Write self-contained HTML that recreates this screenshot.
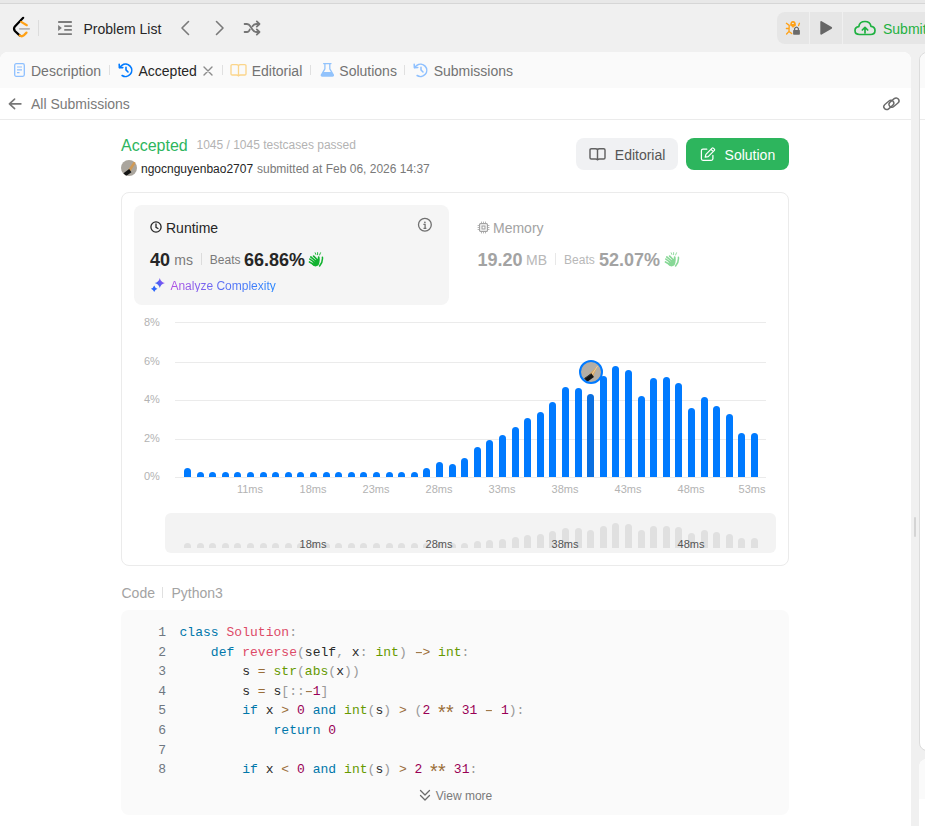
<!DOCTYPE html>
<html><head><meta charset="utf-8">
<style>
*{margin:0;padding:0;box-sizing:border-box}
html,body{width:925px;height:826px;overflow:hidden;background:#f0f0f0;font-family:"Liberation Sans",sans-serif}
.a{position:absolute}
.t{position:absolute;white-space:nowrap;line-height:1}
.bar{position:absolute;width:7px;border-radius:3.5px 3.5px 0 0}
.mbar{position:absolute;width:7px;border-radius:3.5px 3.5px 0 0;background:#e0e0e0}
.grid{position:absolute;left:175px;width:591px;height:1px;background:#ebebeb}
.yl{position:absolute;font-size:11px;color:#b3b3b3;line-height:1;white-space:nowrap}
.xl{position:absolute;font-size:11px;color:#b3b3b3;line-height:1;white-space:nowrap;width:60px;text-align:center}
.code{position:absolute;left:179.5px;font-family:"Liberation Mono",monospace;font-size:13px;line-height:1;letter-spacing:0.03px;white-space:pre;color:#2a2a2a}
.ln{position:absolute;left:130px;width:36px;text-align:right;font-family:"Liberation Mono",monospace;font-size:13px;line-height:1;color:#6e7781}
.ast{display:inline-block;transform:translateY(4.6px) scale(1.5)} .mn{display:inline-block;transform:scaleX(1.7)}
.k{color:#0077aa} .f{color:#dd4a68} .b{color:#669900} .o{color:#9a6e3a} .n{color:#990055} .p{color:#999}
</style></head><body>
<!-- top strip -->
<div class="a" style="left:0;top:0;width:925px;height:3px;background:#e8e8e8"></div>
<div class="a" style="left:0;top:3px;width:925px;height:1px;background:#d6d6d6"></div>

<!-- logo -->
<svg class="a" style="left:0;top:0" width="40" height="40" viewBox="0 0 40 40">
  <path d="M23.2 17.8 L14.9 26.4 Q13.1 28.7 14.9 31 L19.6 35.4" stroke="#000" stroke-width="2.2" fill="none" stroke-linecap="round"/>
  <path d="M21.2 21.9 L26.8 25.2" stroke="#ffa116" stroke-width="2.2" fill="none" stroke-linecap="round"/>
  <path d="M19.6 35.4 Q21.8 37.2 24 35.1 L26.5 32.6" stroke="#ffa116" stroke-width="2.2" fill="none" stroke-linecap="round"/>
  <path d="M19.8 28.8 H29.2" stroke="#b3b3b3" stroke-width="1.7" fill="none" stroke-linecap="round"/>
</svg>
<div class="a" style="left:38px;top:20px;width:1px;height:16px;background:#dcdcdc"></div>

<!-- problem list icon -->
<svg class="a" style="left:54px;top:16px" width="24" height="24" viewBox="0 0 24 24"><g fill="#7c7c7c">
  <rect x="4.1" y="5.1" width="13.8" height="1.8" rx="0.3"/>
  <rect x="10.2" y="9.2" width="7.7" height="1.7" rx="0.3"/>
  <rect x="10.2" y="13.1" width="7.7" height="1.7" rx="0.3"/>
  <rect x="4.1" y="17.2" width="13.8" height="1.8" rx="0.3"/>
  <path d="M4.1 8.9 L7.9 11.95 L4.1 15 Z"/></g>
</svg>
<div class="t" style="left:83.5px;top:22.35px;font-size:14px;color:#262626;font-weight:400;">Problem List</div>
<svg class="a" style="left:179px;top:20px" width="12" height="16" viewBox="0 0 12 16"><path d="M9.5 1.5 L3 8 L9.5 14.5" stroke="#7a7a7a" stroke-width="1.6" fill="none" stroke-linecap="round" stroke-linejoin="round"/></svg>
<svg class="a" style="left:214px;top:20px" width="12" height="16" viewBox="0 0 12 16"><path d="M2.5 1.5 L9 8 L2.5 14.5" stroke="#7a7a7a" stroke-width="1.6" fill="none" stroke-linecap="round" stroke-linejoin="round"/></svg>
<svg class="a" style="left:238px;top:16px" width="28" height="24" viewBox="0 0 28 24">
  <g stroke="#757575" stroke-width="1.8" fill="none" stroke-linecap="round" stroke-linejoin="round">
  <path d="M6.6 8 H9 Q11 8 12.5 10.5 L14.2 13.3 Q15.8 16 18.5 16 H21"/>
  <path d="M6.6 16 H9 Q11 16 11.8 13.5"/>
  <path d="M14.5 10.2 Q16 8 18.5 8 H21"/>
  <path d="M18.8 5.4 L21.5 8 L18.8 10.6 M18.8 13.4 L21.5 16 L18.8 18.6"/>
  </g>
</svg>

<!-- right toolbar -->
<div class="a" style="left:777px;top:12px;width:160px;height:32px;border-radius:8px;background:#e6e6e6"></div>
<div class="a" style="left:809px;top:12px;width:1px;height:32px;background:#f0f0f0"></div>
<div class="a" style="left:842px;top:12px;width:1px;height:32px;background:#f0f0f0"></div>
<svg class="a" style="left:782px;top:18px" width="22" height="20" viewBox="0 0 22 20">
  <g stroke="#ffa116" stroke-width="1.35" fill="none" stroke-linecap="round" stroke-linejoin="round">
    <path d="M4.4 5.3 L7.2 7.4 M7.2 7.4 L7 13.5 M4.4 10.5 H7 M4.6 16 L7 13.4 L9.7 15.6 M17.4 5.3 L16.6 7.6"/>
  </g>
  <path d="M8.2 7.6 Q8 3 11 3 Q14 3 13.9 7.4 Q13.2 8.6 11 8.8 Q8.8 8.6 8.2 7.6 Z" fill="#ffa116"/>
  <rect x="10.1" y="8" width="1.8" height="1.4" fill="#ffa116"/>
  <ellipse cx="10.9" cy="5.4" rx="1.05" ry="0.55" fill="#e6e6e6"/>
  <rect x="11.1" y="12" width="6.8" height="4.8" rx="0.7" fill="#6b6b6b"/>
  <path d="M12.6 12.2 V10.5 Q14.5 7.6 16.4 10.5 V12.2" stroke="#6b6b6b" stroke-width="1.3" fill="none"/>
</svg>
<svg class="a" style="left:819px;top:20px" width="14" height="16" viewBox="0 0 14 16"><path d="M2.2 2 L12.2 7.9 L2.2 13.8 Z" fill="#666" stroke="#666" stroke-width="1.8" stroke-linejoin="round"/></svg>
<svg class="a" style="left:854px;top:20px" width="22" height="16" viewBox="0 0 22 16">
  <path d="M5.5 14.5 Q1 14.5 1 10.5 Q1 7 4.8 6.6 Q5.5 1.5 11 1.5 Q16 1.5 17 6.3 Q21 6.8 21 10.5 Q21 14.5 16.5 14.5 Z" stroke="#1fb141" stroke-width="1.7" fill="none" stroke-linejoin="round"/>
  <path d="M11 13 V7.5 M8.3 10 L11 7.3 L13.7 10" stroke="#1fb141" stroke-width="1.7" fill="none" stroke-linecap="round" stroke-linejoin="round"/>
</svg>
<div class="t" style="left:883px;top:21.65px;font-size:14px;color:#1fb141;font-weight:400;">Submit</div>

<!-- left panel -->
<div class="a" style="left:0;top:52px;width:911px;height:800px;background:#fff;border-radius:8px 8px 0 0;overflow:hidden">
  <div class="a" style="left:0;top:0;width:911px;height:36px;background:#fafafa"></div>
  <div class="a" style="left:0;top:67px;width:911px;height:1px;background:#ebebeb"></div>
</div>

<!-- right panel -->
<div class="a" style="left:919px;top:52px;width:40px;height:699px;background:#fff;border:1px solid #dcdcdc;border-radius:8px">
  <div class="a" style="left:0;top:0;width:40px;height:35px;background:#fafafa;border-radius:8px 0 0 0"></div>
  <div class="a" style="left:0;top:66px;width:40px;height:1px;background:#ebebeb"></div>
</div>
<div class="a" style="left:918.5px;top:759px;width:40px;height:100px;background:#fff;border-radius:8px;overflow:hidden">
  <div class="a" style="left:0;top:0;width:40px;height:40px;background:#fafafa"></div>
</div>
<div class="a" style="left:913.5px;top:517px;width:2px;height:20px;background:#d4d4d4;border-radius:1px"></div>

<!-- tabs -->
<svg class="a" style="left:14px;top:63px" width="11" height="14" viewBox="0 0 11 14">
  <rect x="0.7" y="0.7" width="9.6" height="12.6" rx="1.5" stroke="#8ec0ff" stroke-width="1.3" fill="none"/>
  <path d="M3 4 H8 M3 6.8 H8 M3 9.6 H5.5" stroke="#8ec0ff" stroke-width="1.2"/>
</svg>
<div class="t" style="left:31px;top:64.15px;font-size:14px;color:#737373;font-weight:400;">Description</div>
<div class="a" style="left:109px;top:65px;width:1px;height:10px;background:#e0e0e0"></div>
<svg class="a" style="left:114px;top:58px" width="22" height="22" viewBox="0 0 22 22">
  <g stroke="#007aff" stroke-width="1.6" fill="none" stroke-linecap="round" stroke-linejoin="round">
  <path d="M8.1 17.5 A6.2 6.2 0 1 0 7.9 7.3 L5.6 9.5"/>
  <path d="M5.2 6.2 L5.4 9.7 L8.8 9.6"/>
  <path d="M12 9.2 V11.9 L14 14"/>
  </g>
</svg>
<div class="t" style="left:138.5px;top:64.15px;font-size:14px;color:#262626;font-weight:400;">Accepted</div>
<svg class="a" style="left:203px;top:66px" width="10" height="10" viewBox="0 0 10 10"><path d="M1 1 L9 9 M9 1 L1 9" stroke="#8c8c8c" stroke-width="1.4" stroke-linecap="round"/></svg>
<div class="a" style="left:222px;top:65px;width:1px;height:10px;background:#e0e0e0"></div>
<svg class="a" style="left:230px;top:64px" width="17" height="13" viewBox="0 0 17 13">
  <path d="M8.5 1.6 Q8 0.7 6.5 0.7 H2.2 Q1 0.7 1 1.9 V9.9 Q1 11 2.2 11 H6.5 Q8 11 8.5 12 Q9 11 10.5 11 H14.8 Q16 11 16 9.9 V1.9 Q16 0.7 14.8 0.7 H10.5 Q9 0.7 8.5 1.6 Z M8.5 1.6 V12" stroke="#fbd58a" stroke-width="1.3" fill="none" stroke-linejoin="round"/>
</svg>
<div class="t" style="left:251.7px;top:64.15px;font-size:14px;color:#737373;font-weight:400;">Editorial</div>
<div class="a" style="left:310px;top:65px;width:1px;height:10px;background:#e0e0e0"></div>
<svg class="a" style="left:316px;top:58px" width="24" height="22" viewBox="0 0 24 22">
  <path d="M7.6 5.6 H15" stroke="#92c3fc" stroke-width="1.3" stroke-linecap="round"/>
  <path d="M8.9 5.8 V10.8 L5.4 16.8 Q4.9 18 6.3 18 H16.4 Q17.8 18 17.3 16.8 L13.8 10.8 V5.8" stroke="#92c3fc" stroke-width="1.3" fill="none" stroke-linejoin="round"/>
  <path d="M7.1 14 H15.6 L17.2 16.8 Q17.8 18 16.4 18 H6.3 Q4.9 18 5.5 16.8 Z" fill="#92c3fc"/>
</svg>
<div class="t" style="left:339.3px;top:64.15px;font-size:14px;color:#737373;font-weight:400;">Solutions</div>
<div class="a" style="left:404px;top:65px;width:1px;height:10px;background:#e0e0e0"></div>
<svg class="a" style="left:409px;top:58px" width="22" height="22" viewBox="0 0 22 22">
  <g stroke="#8ec0ff" stroke-width="1.5" fill="none" stroke-linecap="round" stroke-linejoin="round">
  <path d="M8.1 17.5 A6.2 6.2 0 1 0 7.9 7.3 L5.6 9.5"/>
  <path d="M5.2 6.2 L5.4 9.7 L8.8 9.6"/>
  <path d="M12 9.2 V11.9 L14 14"/>
  </g>
</svg>
<div class="t" style="left:433.7px;top:64.15px;font-size:14px;color:#737373;font-weight:400;">Submissions</div>

<!-- All submissions row -->
<svg class="a" style="left:0;top:92px" width="24" height="24" viewBox="0 0 24 24"><path d="M20.9 11.9 H9.6 M14.6 7.1 L9.4 11.9 L14.6 16.7" stroke="#777" stroke-width="1.6" fill="none" stroke-linecap="round" stroke-linejoin="round"/></svg>
<div class="t" style="left:31px;top:97.15px;font-size:14px;color:#7a7a7a;font-weight:400;">All Submissions</div>
<svg class="a" style="left:880px;top:94px" width="22" height="20" viewBox="0 0 22 20">
  <g stroke="#6b6b6b" stroke-width="1.4" fill="none">
   <rect x="-5.6" y="-2.9" width="11.2" height="5.8" rx="2.9" transform="translate(8.8 10.9) rotate(-40)"/>
   <rect x="-5.6" y="-2.9" width="11.2" height="5.8" rx="2.9" transform="translate(14 8.6) rotate(-40)"/>
  </g>
</svg>

<!-- header -->
<div class="t" style="left:121px;top:138.46px;font-size:16px;color:#2db55d;font-weight:400;">Accepted</div>
<div class="t" style="left:196.5px;top:138.84px;font-size:12px;color:#b3b3b3;font-weight:400;">1045 / 1045 testcases passed</div>
<div class="a" style="left:121px;top:160px;width:16px;height:16px;border-radius:50%;background:#aaa59d;overflow:hidden">
 <svg class="a" style="left:0;top:0" width="16" height="16" viewBox="0 0 16 16">
  <path d="M13.5 2.6 L7.8 11.5" stroke="#d09a55" stroke-width="2.6" stroke-linecap="round"/>
  <path d="M9.3 10.6 L3.6 14.8" stroke="#151515" stroke-width="3.8"/>
 </svg>
</div>
<div class="t" style="left:141px;top:162.54px;font-size:12px;color:#262626;font-weight:400;">ngocnguyenbao2707</div>
<div class="t" style="left:257px;top:162.54px;font-size:12px;color:#7a7a7a;font-weight:400;">submitted at Feb 06, 2026 14:37</div>

<!-- buttons -->
<div class="a" style="left:576px;top:138px;width:102px;height:32px;border-radius:8px;background:#f0f1f3"></div>
<svg class="a" style="left:589.3px;top:147.6px" width="17" height="13" viewBox="0 0 17 13">
  <path d="M8.5 1.6 Q8 0.8 6.5 0.8 H2.3 Q1 0.8 1 2 V9.7 Q1 10.9 2.3 10.9 H6.5 Q8 10.9 8.5 11.8 Q9 10.9 10.5 10.9 H14.7 Q16 10.9 16 9.7 V2 Q16 0.8 14.7 0.8 H10.5 Q9 0.8 8.5 1.6 Z M8.5 1.6 V11.8" stroke="#626262" stroke-width="1.45" fill="none" stroke-linejoin="round"/>
</svg>
<div class="t" style="left:614.8px;top:148.15px;font-size:14px;color:#555;font-weight:400;">Editorial</div>
<div class="a" style="left:686px;top:138px;width:103px;height:32px;border-radius:8px;background:#2db55d"></div>
<svg class="a" style="left:694px;top:142px" width="24" height="22" viewBox="0 0 24 22">
  <path d="M12.8 7.2 H9 Q7.4 7.2 7.4 8.8 V16.8 Q7.4 18.3 9 18.3 H17.3 Q18.9 18.3 18.9 16.8 V13.3" stroke="#fff" stroke-width="1.25" fill="none" stroke-linecap="round"/>
  <path d="M11.2 15.1 L11.9 12.3 L18.1 6.1 Q18.7 5.5 19.3 6.1 L20.4 7.2 Q21 7.8 20.4 8.4 L14.2 14.6 Z M17 7.3 L19.2 9.5" stroke="#fff" stroke-width="1.2" fill="none" stroke-linejoin="round"/>
</svg>
<div class="t" style="left:724.6px;top:148.15px;font-size:14px;color:#fff;font-weight:400;">Solution</div>

<!-- outer card -->
<div class="a" style="left:121px;top:192px;width:668px;height:374px;border:1px solid #ebebeb;border-radius:8px"></div>
<div class="a" style="left:134px;top:205px;width:315px;height:100px;border-radius:8px;background:#f5f5f5"></div>
<svg class="a" style="left:149.5px;top:220.8px" width="12" height="12" viewBox="0 0 12 12"><circle cx="6" cy="6" r="5.1" stroke="#262626" stroke-width="1.3" fill="none"/><path d="M6 3 V6.3 L8 7.5" stroke="#262626" stroke-width="1.3" fill="none" stroke-linecap="round"/></svg>
<div class="t" style="left:166px;top:220.75px;font-size:14px;color:#262626;font-weight:400;">Runtime</div>
<svg class="a" style="left:417px;top:217px" width="16" height="16" viewBox="0 0 16 16">
  <circle cx="7.9" cy="7.8" r="6.4" stroke="#707070" stroke-width="1.3" fill="none"/>
  <path d="M6.4 7.4 H8.1 V11.3 M6.5 11.3 H9.4" stroke="#707070" stroke-width="1.3" fill="none"/>
  <circle cx="7.9" cy="5.3" r="0.85" fill="#707070"/>
</svg>
<div class="t" style="left:150px;top:250.76px;font-size:18px;color:#262626;font-weight:700;">40</div>
<div class="t" style="left:174.3px;top:253.35px;font-size:14px;color:#7a7a7a;font-weight:400;">ms</div>
<div class="a" style="left:201px;top:253px;width:1px;height:12px;background:#dcdcdc"></div>
<div class="t" style="left:209.8px;top:254.24px;font-size:12px;color:#7a7a7a;font-weight:400;">Beats</div>
<div class="t" style="left:244px;top:250.76px;font-size:18px;color:#262626;font-weight:700;">66.86%</div>
<svg class="a" style="left:308px;top:251.5px" width="16" height="15" viewBox="0 0 16 15">
  <g stroke="#11b22f" stroke-linecap="round" fill="none">
    <path d="M5.6 4.2 L9.5 8 M2.8 5 L8.5 9.6 M1.9 7.1 L7.5 11 M1.5 10 L6 12.5" stroke-width="1.7"/>
    <path d="M10.7 5.2 Q11.2 8 10.4 10.5" stroke-width="1.8"/>
    <path d="M14.4 5.2 Q15 10 11.6 14" stroke-width="1.5"/>
    <path d="M7.2 0.8 L7.8 2.4 M9.6 0.6 V2.7 M12.5 0.8 L11.6 3" stroke-width="0.9"/>
  </g>
  <path d="M5.5 8.5 L10.2 6.5 Q11.4 9 11.2 11.5 Q10.8 14 7.5 14.4 Q5 14.3 3.6 12 Z" fill="#11b22f"/>
  <path d="M4.3 4.7 L7.6 7.6 M2.4 6.1 L6.4 9.2 M1.7 8.6 L5 10.8" stroke="#f5f5f5" stroke-width="0.45" stroke-linecap="round" opacity="0.8"/>
</svg>
<svg class="a" style="left:148px;top:276px" width="20" height="18" viewBox="0 0 20 18">
  <defs><linearGradient id="sg" gradientUnits="userSpaceOnUse" x1="3" y1="14" x2="17" y2="6"><stop offset="0" stop-color="#1f66ff"/><stop offset="0.5" stop-color="#3d63f5"/><stop offset="1" stop-color="#9b4ef0"/></linearGradient></defs>
  <path d="M11.8 1.9000000000000004 Q12.718 6.082 16.9 7 Q12.718 7.918 11.8 12.1 Q10.882000000000001 7.918 6.700000000000001 7 Q10.882000000000001 6.082 11.8 1.9000000000000004 Z" fill="url(#sg)"/>
  <path d="M6.2 9.5 Q7.025 11.975000000000001 9.5 12.8 Q7.025 13.625 6.2 16.1 Q5.375 13.625 2.9000000000000004 12.8 Q5.375 11.975000000000001 6.2 9.5 Z" fill="url(#sg)"/>
</svg>
<div class="t" style="left:170.4px;top:279.84px;font-size:12px;background:linear-gradient(90deg,#b34fe3,#5a6ef5 50%,#2a88ff);-webkit-background-clip:text;background-clip:text;color:transparent">Analyze Complexity</div>

<!-- memory -->
<svg class="a" style="left:477px;top:220.5px" width="13" height="13" viewBox="0 0 13 13">
  <g stroke="#a3a3a3" fill="none">
  <rect x="2.6" y="2.6" width="7.8" height="7.8" rx="1" stroke-width="1.2"/>
  <rect x="5" y="5" width="3" height="3" stroke-width="1.1"/>
  <path d="M4.5 0.6 V2.2 M6.5 0.6 V2.2 M8.5 0.6 V2.2 M4.5 10.8 V12.4 M6.5 10.8 V12.4 M8.5 10.8 V12.4 M0.6 4.5 H2.2 M0.6 6.5 H2.2 M0.6 8.5 H2.2 M10.8 4.5 H12.4 M10.8 6.5 H12.4 M10.8 8.5 H12.4" stroke-width="0.8"/>
  </g>
</svg>
<div class="t" style="left:493px;top:220.75px;font-size:14px;color:#a3a3a3;font-weight:400;">Memory</div>
<div class="t" style="left:477.5px;top:250.76px;font-size:18px;color:#a3a3a3;font-weight:700;">19.20</div>
<div class="t" style="left:526px;top:253.35px;font-size:14px;color:#b8b8b8;font-weight:400;">MB</div>
<div class="a" style="left:555px;top:253px;width:1px;height:12px;background:#e8e8e8"></div>
<div class="t" style="left:564.1px;top:254.24px;font-size:12px;color:#b8b8b8;font-weight:400;">Beats</div>
<div class="t" style="left:599px;top:250.76px;font-size:18px;color:#a3a3a3;font-weight:700;">52.07%</div>
<svg class="a" style="left:663.5px;top:251.5px" width="16" height="15" viewBox="0 0 16 15" opacity="0.5">
  <g stroke="#11b22f" stroke-linecap="round" fill="none">
    <path d="M5.6 4.2 L9.5 8 M2.8 5 L8.5 9.6 M1.9 7.1 L7.5 11 M1.5 10 L6 12.5" stroke-width="1.7"/>
    <path d="M10.7 5.2 Q11.2 8 10.4 10.5" stroke-width="1.8"/>
    <path d="M14.4 5.2 Q15 10 11.6 14" stroke-width="1.5"/>
    <path d="M7.2 0.8 L7.8 2.4 M9.6 0.6 V2.7 M12.5 0.8 L11.6 3" stroke-width="0.9"/>
  </g>
  <path d="M5.5 8.5 L10.2 6.5 Q11.4 9 11.2 11.5 Q10.8 14 7.5 14.4 Q5 14.3 3.6 12 Z" fill="#11b22f"/>
  <path d="M4.3 4.7 L7.6 7.6 M2.4 6.1 L6.4 9.2 M1.7 8.6 L5 10.8" stroke="#f5f5f5" stroke-width="0.45" stroke-linecap="round" opacity="0.8"/>
</svg>

<!-- chart -->
<div class="grid" style="top:322px"></div>
<div class="grid" style="top:362px"></div>
<div class="grid" style="top:400px"></div>
<div class="grid" style="top:439px"></div>
<div class="grid" style="top:477px"></div>
<div class="yl" style="left:144px;top:316.5px">8%</div>
<div class="yl" style="left:144px;top:355.5px">6%</div>
<div class="yl" style="left:144px;top:393.5px">4%</div>
<div class="yl" style="left:144px;top:432.5px">2%</div>
<div class="yl" style="left:144px;top:470.5px">0%</div>
<div class="bar" style="left:184.0px;top:468px;height:9px;background:#007aff"></div><div class="bar" style="left:196.6px;top:472px;height:5px;background:#007aff"></div><div class="bar" style="left:209.2px;top:472px;height:5px;background:#007aff"></div><div class="bar" style="left:221.8px;top:472px;height:5px;background:#007aff"></div><div class="bar" style="left:234.4px;top:472px;height:5px;background:#007aff"></div><div class="bar" style="left:247.0px;top:472px;height:5px;background:#007aff"></div><div class="bar" style="left:259.6px;top:472px;height:5px;background:#007aff"></div><div class="bar" style="left:272.2px;top:472px;height:5px;background:#007aff"></div><div class="bar" style="left:284.8px;top:472px;height:5px;background:#007aff"></div><div class="bar" style="left:297.4px;top:472px;height:5px;background:#007aff"></div><div class="bar" style="left:310.0px;top:472px;height:5px;background:#007aff"></div><div class="bar" style="left:322.6px;top:472px;height:5px;background:#007aff"></div><div class="bar" style="left:335.2px;top:472px;height:5px;background:#007aff"></div><div class="bar" style="left:347.8px;top:472px;height:5px;background:#007aff"></div><div class="bar" style="left:360.4px;top:472px;height:5px;background:#007aff"></div><div class="bar" style="left:373.0px;top:472px;height:5px;background:#007aff"></div><div class="bar" style="left:385.6px;top:472px;height:5px;background:#007aff"></div><div class="bar" style="left:398.2px;top:472px;height:5px;background:#007aff"></div><div class="bar" style="left:410.8px;top:472px;height:5px;background:#007aff"></div><div class="bar" style="left:423.4px;top:468px;height:9px;background:#007aff"></div><div class="bar" style="left:436.0px;top:462px;height:15px;background:#007aff"></div><div class="bar" style="left:448.6px;top:464px;height:13px;background:#007aff"></div><div class="bar" style="left:461.2px;top:458px;height:19px;background:#007aff"></div><div class="bar" style="left:473.8px;top:447px;height:30px;background:#007aff"></div><div class="bar" style="left:486.4px;top:440px;height:37px;background:#007aff"></div><div class="bar" style="left:499.0px;top:435px;height:42px;background:#007aff"></div><div class="bar" style="left:511.6px;top:427px;height:50px;background:#007aff"></div><div class="bar" style="left:524.2px;top:418px;height:59px;background:#007aff"></div><div class="bar" style="left:536.8px;top:412px;height:65px;background:#007aff"></div><div class="bar" style="left:549.4px;top:402px;height:75px;background:#007aff"></div><div class="bar" style="left:562.0px;top:387px;height:90px;background:#007aff"></div><div class="bar" style="left:574.6px;top:388px;height:89px;background:#007aff"></div><div class="bar" style="left:587.2px;top:394px;height:83px;background:#0a6fe0"></div><div class="bar" style="left:599.8px;top:376px;height:101px;background:#007aff"></div><div class="bar" style="left:612.4px;top:366px;height:111px;background:#007aff"></div><div class="bar" style="left:625.0px;top:370px;height:107px;background:#007aff"></div><div class="bar" style="left:637.6px;top:396px;height:81px;background:#007aff"></div><div class="bar" style="left:650.2px;top:378px;height:99px;background:#007aff"></div><div class="bar" style="left:662.8px;top:376.5px;height:100.5px;background:#007aff"></div><div class="bar" style="left:675.4px;top:383px;height:94px;background:#007aff"></div><div class="bar" style="left:688.0px;top:408px;height:69px;background:#007aff"></div><div class="bar" style="left:700.6px;top:397px;height:80px;background:#007aff"></div><div class="bar" style="left:713.2px;top:406px;height:71px;background:#007aff"></div><div class="bar" style="left:725.8px;top:414px;height:63px;background:#007aff"></div><div class="bar" style="left:738.4px;top:433px;height:44px;background:#007aff"></div><div class="bar" style="left:751.0px;top:433px;height:44px;background:#007aff"></div>
<div class="xl" style="left:220px;top:484px">11ms</div>
<div class="xl" style="left:283px;top:484px">18ms</div>
<div class="xl" style="left:346px;top:484px">23ms</div>
<div class="xl" style="left:409px;top:484px">28ms</div>
<div class="xl" style="left:472px;top:484px">33ms</div>
<div class="xl" style="left:535px;top:484px">38ms</div>
<div class="xl" style="left:598px;top:484px">43ms</div>
<div class="xl" style="left:661px;top:484px">48ms</div>
<div class="xl" style="left:722px;top:484px">53ms</div>
<!-- avatar on chart -->
<div class="a" style="left:579px;top:360px;width:24px;height:24px;border-radius:50%;border:2.2px solid #007aff;background:#b3aea6;overflow:hidden">
 <svg class="a" style="left:0;top:0" width="20" height="20" viewBox="0 0 20 20">
  <path d="M17.2 2.8 L12 15 L8.1 12.5 Z" fill="#d9a862"/>
  <path d="M16.6 4 L10.4 13.3" stroke="#f0dcc0" stroke-width="0.7"/>
  <path d="M11.6 13.2 L4.6 18.2" stroke="#151515" stroke-width="4.6"/>
  <path d="M10 12.2 L3.2 17" stroke="#3a4040" stroke-width="0.7"/>
 </svg>
</div>

<!-- mini chart -->
<div class="a" style="left:165px;top:513px;width:611px;height:40px;border-radius:6px;background:#f3f3f3;overflow:hidden"></div>
<div class="mbar" style="left:184.0px;top:543.0px;height:5.0px"></div><div class="mbar" style="left:196.6px;top:543.0px;height:5.0px"></div><div class="mbar" style="left:209.2px;top:543.0px;height:5.0px"></div><div class="mbar" style="left:221.8px;top:543.0px;height:5.0px"></div><div class="mbar" style="left:234.4px;top:543.0px;height:5.0px"></div><div class="mbar" style="left:247.0px;top:543.0px;height:5.0px"></div><div class="mbar" style="left:259.6px;top:543.0px;height:5.0px"></div><div class="mbar" style="left:272.2px;top:543.0px;height:5.0px"></div><div class="mbar" style="left:284.8px;top:543.0px;height:5.0px"></div><div class="mbar" style="left:297.4px;top:543.0px;height:5.0px"></div><div class="mbar" style="left:310.0px;top:543.0px;height:5.0px"></div><div class="mbar" style="left:322.6px;top:543.0px;height:5.0px"></div><div class="mbar" style="left:335.2px;top:543.0px;height:5.0px"></div><div class="mbar" style="left:347.8px;top:543.0px;height:5.0px"></div><div class="mbar" style="left:360.4px;top:543.0px;height:5.0px"></div><div class="mbar" style="left:373.0px;top:543.0px;height:5.0px"></div><div class="mbar" style="left:385.6px;top:543.0px;height:5.0px"></div><div class="mbar" style="left:398.2px;top:543.0px;height:5.0px"></div><div class="mbar" style="left:410.8px;top:543.0px;height:5.0px"></div><div class="mbar" style="left:423.4px;top:543.0px;height:5.0px"></div><div class="mbar" style="left:436.0px;top:543.0px;height:5.0px"></div><div class="mbar" style="left:448.6px;top:543.0px;height:5.0px"></div><div class="mbar" style="left:461.2px;top:543.0px;height:5.0px"></div><div class="mbar" style="left:473.8px;top:541.3px;height:6.7px"></div><div class="mbar" style="left:486.4px;top:539.8px;height:8.2px"></div><div class="mbar" style="left:499.0px;top:538.7px;height:9.3px"></div><div class="mbar" style="left:511.6px;top:536.9px;height:11.1px"></div><div class="mbar" style="left:524.2px;top:534.9px;height:13.1px"></div><div class="mbar" style="left:536.8px;top:533.6px;height:14.4px"></div><div class="mbar" style="left:549.4px;top:531.4px;height:16.6px"></div><div class="mbar" style="left:562.0px;top:528.0px;height:20.0px"></div><div class="mbar" style="left:574.6px;top:528.2px;height:19.8px"></div><div class="mbar" style="left:587.2px;top:529.6px;height:18.4px"></div><div class="mbar" style="left:599.8px;top:525.6px;height:22.4px"></div><div class="mbar" style="left:612.4px;top:523.4px;height:24.6px"></div><div class="mbar" style="left:625.0px;top:524.2px;height:23.8px"></div><div class="mbar" style="left:637.6px;top:530.0px;height:18.0px"></div><div class="mbar" style="left:650.2px;top:526.0px;height:22.0px"></div><div class="mbar" style="left:662.8px;top:525.7px;height:22.3px"></div><div class="mbar" style="left:675.4px;top:527.1px;height:20.9px"></div><div class="mbar" style="left:688.0px;top:532.7px;height:15.3px"></div><div class="mbar" style="left:700.6px;top:530.2px;height:17.8px"></div><div class="mbar" style="left:713.2px;top:532.2px;height:15.8px"></div><div class="mbar" style="left:725.8px;top:534.0px;height:14.0px"></div><div class="mbar" style="left:738.4px;top:538.2px;height:9.8px"></div><div class="mbar" style="left:751.0px;top:538.2px;height:9.8px"></div>
<div class="xl" style="left:283px;top:539px;color:#555">18ms</div>
<div class="xl" style="left:409px;top:539px;color:#555">28ms</div>
<div class="xl" style="left:535px;top:539px;color:#555">38ms</div>
<div class="xl" style="left:661px;top:539px;color:#555">48ms</div>

<!-- code -->
<div class="t" style="left:121.5px;top:585.75px;font-size:14px;color:#a3a3a3;font-weight:400;">Code</div>
<div class="a" style="left:162px;top:586.5px;width:1px;height:11px;background:#e0e0e0"></div>
<div class="t" style="left:171.5px;top:585.75px;font-size:14px;color:#a3a3a3;font-weight:400;">Python3</div>
<div class="a" style="left:121px;top:610px;width:668px;height:205px;border-radius:8px;background:#fafafa"></div>
<div class="ln" style="top:626.00px">1</div><div class="code" style="top:626.00px"><span class="k">class</span> <span class="f">Solution</span><span class="p">:</span></div><div class="ln" style="top:645.60px">2</div><div class="code" style="top:645.60px">    <span class="k">def</span> <span class="f">reverse</span><span class="p">(</span>self<span class="p">,</span> x<span class="p">:</span> <span class="b">int</span><span class="p">)</span> <span class="o"><span class="mn">-</span>&gt;</span> <span class="b">int</span><span class="p">:</span></div><div class="ln" style="top:665.20px">3</div><div class="code" style="top:665.20px">        s <span class="o">=</span> <span class="b">str</span><span class="p">(</span><span class="b">abs</span><span class="p">(</span>x<span class="p">)</span><span class="p">)</span></div><div class="ln" style="top:684.80px">4</div><div class="code" style="top:684.80px">        s <span class="o">=</span> s<span class="p">[</span><span class="p">:</span><span class="p">:</span><span class="o"><span class="mn">-</span></span><span class="n">1</span><span class="p">]</span></div><div class="ln" style="top:704.40px">5</div><div class="code" style="top:704.40px">        <span class="k">if</span> x <span class="o">&gt;</span> <span class="n">0</span> <span class="k">and</span> <span class="b">int</span><span class="p">(</span>s<span class="p">)</span> <span class="o">&gt;</span> <span class="p">(</span><span class="n">2</span> <span class="o"><span class="ast">*</span><span class="ast">*</span></span> <span class="n">31</span> <span class="o"><span class="mn">-</span></span> <span class="n">1</span><span class="p">)</span><span class="p">:</span></div><div class="ln" style="top:724.00px">6</div><div class="code" style="top:724.00px">            <span class="k">return</span> <span class="n">0</span></div><div class="ln" style="top:743.60px">7</div><div class="code" style="top:743.60px"></div><div class="ln" style="top:763.20px">8</div><div class="code" style="top:763.20px">        <span class="k">if</span> x <span class="o">&lt;</span> <span class="n">0</span> <span class="k">and</span> <span class="b">int</span><span class="p">(</span>s<span class="p">)</span> <span class="o">&gt;</span> <span class="n">2</span> <span class="o"><span class="ast">*</span><span class="ast">*</span></span> <span class="n">31</span><span class="p">:</span></div>
<svg class="a" style="left:419px;top:789px" width="12" height="13" viewBox="0 0 12 13"><path d="M1.5 1.5 L6 6 L10.5 1.5 M1.5 6.5 L6 11 L10.5 6.5" stroke="#6b6b6b" stroke-width="1.3" fill="none" stroke-linecap="round" stroke-linejoin="round"/></svg>
<div class="t" style="left:435.8px;top:790.14px;font-size:12px;color:#7a7a7a;font-weight:400;">View more</div>
</body></html>
